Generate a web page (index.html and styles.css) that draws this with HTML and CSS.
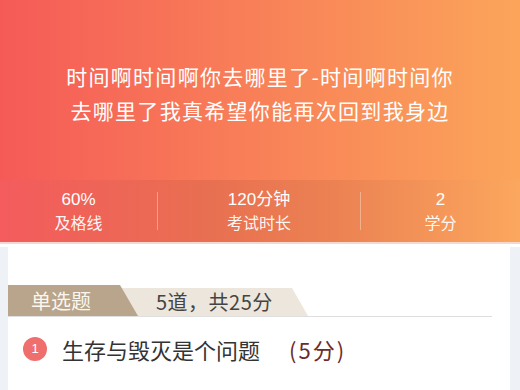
FILE: index.html
```html
<!DOCTYPE html>
<html lang="zh-CN">
<head>
<meta charset="utf-8">
<link rel="stylesheet" href="styles.css">
</head>
<body>
<header class="hero">
  <h1 class="title">时间啊时间啊你去哪里了-时间啊时间你去哪里了我真希望你能再次回到我身边</h1>
  <div class="stats">
    <div class="stat">
      <div class="stat-num">60%</div>
      <div class="stat-label">及格线</div>
    </div>
    <div class="stat stat-sep">
      <div class="stat-num">120分钟</div>
      <div class="stat-label">考试时长</div>
    </div>
    <div class="stat stat-sep">
      <div class="stat-num">2</div>
      <div class="stat-label">学分</div>
    </div>
  </div>
</header>
<main class="main">
  <section class="card">
    <div class="tag-row">
      <div class="tag-type">单选题</div>
      <div class="tag-count">5道，共25分</div>
    </div>
    <div class="question">
      <span class="q-index">1</span>
      <span class="q-text">生存与毁灭是个问题</span>
      <span class="q-score">(5分)</span>
    </div>
  </section>
</main>
</body>
</html>
```
FILE: styles.css
```css
* { box-sizing: border-box; }
html, body { margin: 0; padding: 0; }
body {
  width: 520px;
  height: 390px;
  overflow: hidden;
  background: #eef2f7;
  font-family: "Noto Sans CJK SC", "Noto Sans", sans-serif;
}
.hero {
  background: linear-gradient(to right, #f55a57 0%, #f87d58 45%, #fba55a 100%);
  border-bottom: 2px solid #f4d8d2;
}
.title {
  margin: 0 auto;
  width: 400px;
  padding: 59px 0 53px;
  font-size: 21px;
  font-weight: 400;
  line-height: 34px;
  letter-spacing: 1.3px;
  color: #fff;
  text-align: center;
}
.stats {
  display: grid;
  grid-template-columns: 157px 203px 1fr;
  height: 62px;
  align-items: center;
  background: linear-gradient(to right, rgba(240, 100, 120, 0.18) 0%, rgba(120, 40, 30, 0.12) 40%, rgba(120, 50, 30, 0.1) 65%, rgba(255, 200, 160, 0.06) 100%);
}
.stat {
  text-align: center;
  color: #fff;
  font-size: 16px;
  line-height: 23px;
  display: flex;
  flex-direction: column;
  justify-content: center;
  height: 38px;
}
.stat-sep { border-left: 1px solid rgba(255, 255, 255, 0.35); }
.stat-num { font-family: "Liberation Sans", "Noto Sans CJK SC", sans-serif; font-size: 17px; }
.stat-label { color: rgba(255, 255, 255, 0.95); }
.main {
  border-top: 3px solid #fff;
  padding: 0 10px 0 8px;
}
.card {
  background: #fff;
  height: 150px;
  padding-top: 38px;
}
.tag-row {
  display: flex;
  align-items: flex-end;
  margin-right: 18px;
  border-bottom: 1px solid #dedede;
}
.tag-type {
  position: relative;
  z-index: 1;
  width: 130px;
  height: 31px;
  padding-left: 23px;
  line-height: 31px;
  font-size: 20px;
  color: #fbf6ee;
  background: #b8a58b;
  clip-path: polygon(0 0, 112px 0, 130px 100%, 0 100%);
}
.tag-count {
  margin-left: -20px;
  width: 190px;
  height: 28px;
  padding-left: 38px;
  line-height: 28px;
  font-size: 20px;
  color: #444;
  letter-spacing: 0.5px;
  background: #ece6dc;
  clip-path: polygon(0 0, calc(100% - 16px) 0, 100% 100%, 0 100%);
}
.question {
  display: flex;
  align-items: center;
  margin-top: 17px;
  padding-left: 15px;
  height: 30px;
}
.q-index {
  width: 24px;
  height: 24px;
  border-radius: 50%;
  background: #ef6f6f;
  color: #fff;
  font-family: "Liberation Sans", sans-serif;
  font-size: 13px;
  line-height: 24px;
  text-align: center;
  flex: none;
}
.q-text {
  margin-left: 15px;
  font-size: 22px;
  color: #333;
}
.q-score {
  margin-left: 29px;
  font-size: 22px;
  letter-spacing: 2px;
  color: #6b2c2c;
}
```
